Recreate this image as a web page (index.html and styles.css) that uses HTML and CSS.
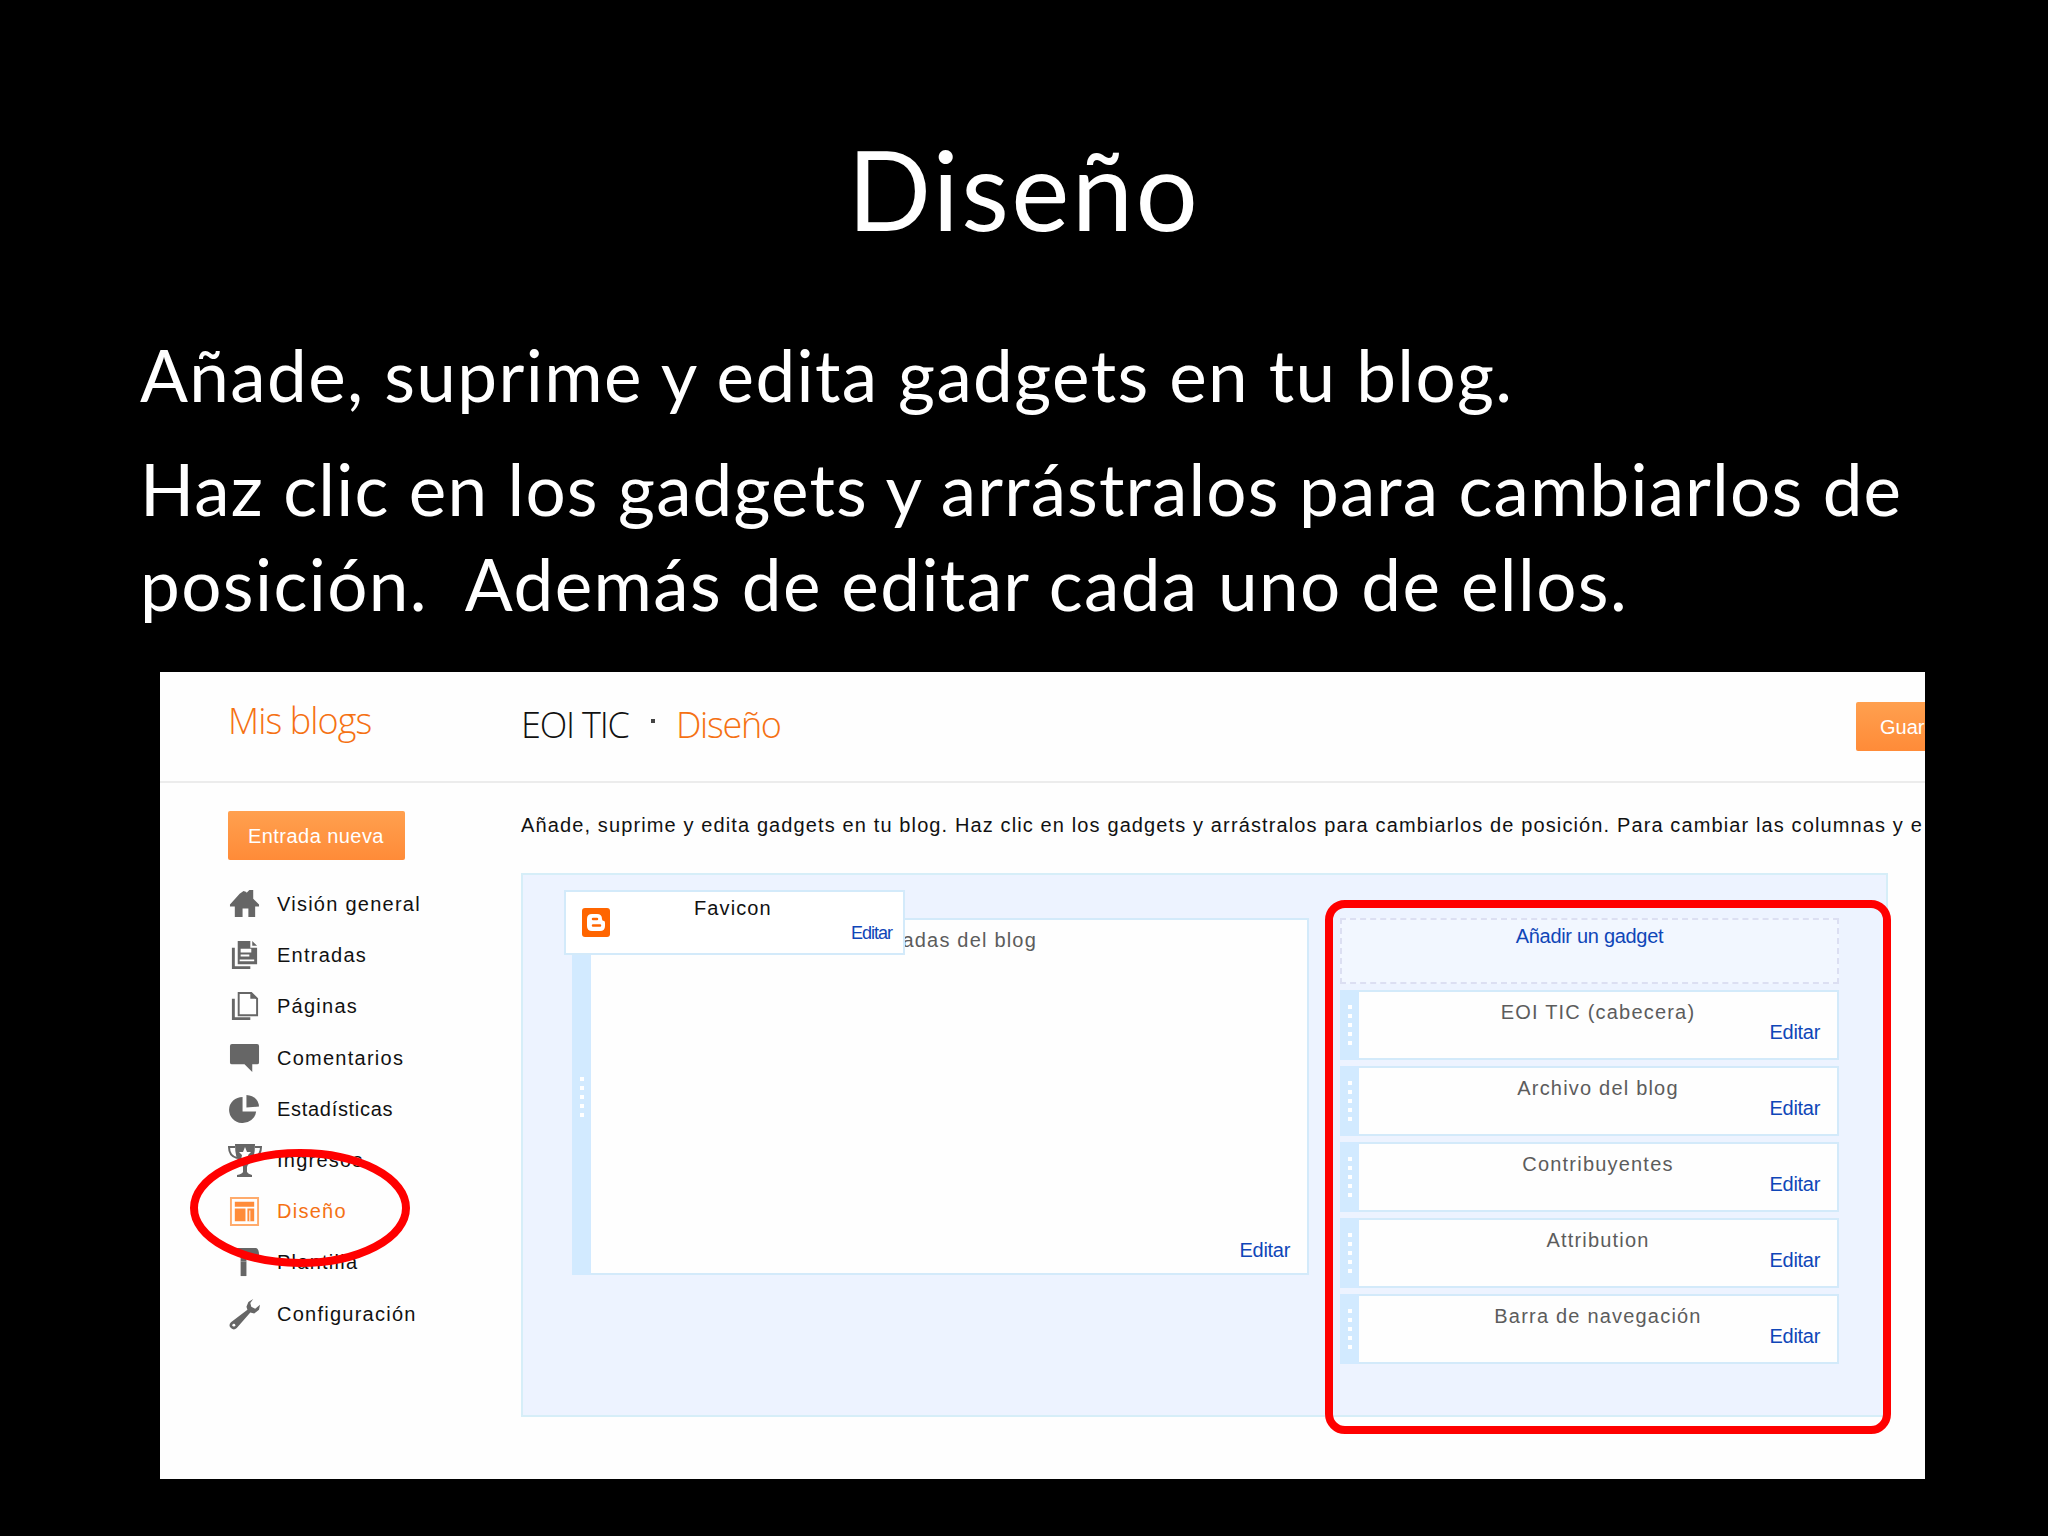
FILE: index.html
```html
<!DOCTYPE html>
<html lang="es">
<head>
    <meta charset="UTF-8">
    <meta name="viewport" content="width=device-width, initial-scale=1.0">
    <title>Diseño</title>
    <link rel="stylesheet" href="styles.css">
</head>
<body>
    <div class="slide">
        <h1>Diseño</h1>

        <div class="slide-text">
            <p>Añade, suprime y edita gadgets en tu blog.</p>
            <p><span class="tight">Haz clic en los gadgets y arrástralos para cambiarlos de</span><br>posición.&nbsp; Además de editar cada uno de ellos.</p>
        </div>

        <div class="blogger">
            <header class="topbar">
                <div class="brand">Mis blogs</div>
                <div class="crumbs">
                    <span class="blog-name">EOI TIC</span>
                    <span class="dot"></span>
                    <span class="section">Diseño</span>
                </div>
                <div class="btn btn-save">Guardar</div>
            </header>

            <div class="content">
                <nav class="sidebar">
                    <div class="btn btn-new">Entrada nueva</div>
                    <ul class="menu">
                        <li>
                            <svg class="icon" viewBox="0 0 32 32"><path d="M1 16 11 5l4-3 3 1v1l3-3h4v9l6 6v2h-4v11h-7v-9h-6v9H6V18H1z"/></svg>
                            <span>Visión general</span>
                        </li>
                        <li>
                            <svg class="icon" viewBox="0 0 32 32"><path d="M3 8h3v19h16v3H3zM9 1h13v7h7v17H9z"/><path d="m24 1 5 5h-5z"/><path class="cut" d="M12 9h11v4H12zM12 15h9v2h-9zM11 20h15v2H11z"/></svg>
                            <span>Entradas</span>
                        </li>
                        <li>
                            <svg class="icon" viewBox="0 0 32 32"><path d="M3 8h3v19h16v3H3z"/><path class="line" d="M10 2h13l6 6v17H10z"/><path d="M22 1v7h7z"/></svg>
                            <span>Páginas</span>
                        </li>
                        <li>
                            <svg class="icon" viewBox="0 0 32 32"><path d="M3 1h26q2 0 2 2v17q0 2-2 2h-5v8l-8-8H3q-2 0-2-2V3q0-2 2-2z"/></svg>
                            <span>Comentarios</span>
                        </li>
                        <li>
                            <svg class="icon" viewBox="0 0 32 32"><path d="M14 3v15h14A14 13.500 0 1 1 14 3z"/><path d="M18 1q12 1 13 12l-13 1z"/></svg>
                            <span class="tight">Estadísticas</span>
                        </li>
                        <li>
                            <svg class="icon trophy" viewBox="0 0 34 34"><path d="M7 0h20q0 15-5 19-3 2-3 4v5q1 2 5 3v2H9v-2q5-1 6-3v-5q0-2-3-4Q7 15 7 0z"/><path class="handle" d="M7 3H1q0 9 8 11M27 3h6q0 9-8 11"/><path class="cut" d="m17 3 2 5h4l-3 3 1 5-4-3-4 3 1-5-3-3h4z"/></svg>
                            <span>Ingresos</span>
                        </li>
                        <li class="active">
                            <svg class="icon" viewBox="0 0 32 32"><path class="frame" d="M2 2h28v28H2z"/><path d="M6 6h20v5H6zM6 13h11v13H6zM19 13h7v13h-7z"/><path class="cut" d="M21 15h1v11h-1z"/></svg>
                            <span>Diseño</span>
                        </li>
                        <li>
                            <svg class="icon" viewBox="0 0 32 32"><path d="M5 1h23q3 1 3 7v2h-3q-1-2-4-2h-6v7h-6V8H5z"/><path d="M12 15h6v15h-6z"/></svg>
                            <span>Plantilla</span>
                        </li>
                        <li>
                            <svg class="icon" viewBox="0 0 32 32"><path d="M25 0 20 3l-2 5 1 3L2 24q-3 3 0 6t6 0l14-16 4 1 5-4 1-5-5 4-4-2-1-4z"/><circle class="cut" cx="5" cy="27" r="1.500"/></svg>
                            <span>Configuración</span>
                        </li>
                    </ul>
                    <svg class="mark-ellipse" viewBox="0 0 222 122"><ellipse cx="111" cy="61" rx="106" ry="55"/></svg>
                </nav>

                <main class="main">
                    <p class="intro">Añade, suprime y edita gadgets en tu blog. Haz clic en los gadgets y arrástralos para cambiarlos de posición. Para cambiar las columnas y e</p>

                    <div class="layout">
                        <div class="widget widget-posts">
                            <div class="grip"><i></i><i></i><i></i><i></i><i></i></div>
                            <div class="widget-body">
                                <div class="widget-title">Entradas del blog</div>
                                <a class="edit">Editar</a>
                            </div>
                        </div>

                        <div class="column">
                            <div class="add-gadget"><a>Añadir un gadget</a></div>
                            <div class="widget">
                                <div class="grip"><i></i><i></i><i></i><i></i><i></i></div>
                                <div class="widget-body">
                                    <div class="widget-title">EOI TIC (cabecera)</div>
                                    <a class="edit">Editar</a>
                                </div>
                            </div>
                            <div class="widget">
                                <div class="grip"><i></i><i></i><i></i><i></i><i></i></div>
                                <div class="widget-body">
                                    <div class="widget-title">Archivo del blog</div>
                                    <a class="edit">Editar</a>
                                </div>
                            </div>
                            <div class="widget">
                                <div class="grip"><i></i><i></i><i></i><i></i><i></i></div>
                                <div class="widget-body">
                                    <div class="widget-title">Contribuyentes</div>
                                    <a class="edit">Editar</a>
                                </div>
                            </div>
                            <div class="widget">
                                <div class="grip"><i></i><i></i><i></i><i></i><i></i></div>
                                <div class="widget-body">
                                    <div class="widget-title">Attribution</div>
                                    <a class="edit">Editar</a>
                                </div>
                            </div>
                            <div class="widget">
                                <div class="grip"><i></i><i></i><i></i><i></i><i></i></div>
                                <div class="widget-body">
                                    <div class="widget-title">Barra de navegación</div>
                                    <a class="edit">Editar</a>
                                </div>
                            </div>
                        </div>

                        <!-- Favicon: queda por encima de las entradas -->
                        <div class="favicon-box">
                            <svg class="blogger-icon" viewBox="0 0 28 29"><rect width="28" height="29" rx="3"/><path class="logo" d="M10 6h5q5 0 5 5 0 2 2 2 1 0 1 2v3q0 5-5 5h-8q-5 0-5-5v-7q0-5 5-5z"/><path class="hole" d="M11 11h4M11 17.500h7"/></svg>
                            <div class="favicon-title">Favicon</div>
                            <a class="edit">Editar</a>
                        </div>
                        <div class="mark-box"></div>
                    </div>
                </main>
            </div>
        </div>
    </div>
</body>
</html>
```
FILE: styles.css
```css
:root {
    --orange: #f57113;
    --link: #0f46b8;
    --line: #d3eafa;
    --grip: #d2eaff;
    --red: #ff0000;
    --gray: #666;
}

* {
    margin: 0;
    padding: 0;
    box-sizing: border-box;
}

body {
    background: #000;
    font-family: 'Liberation Sans', Arial, sans-serif;
    font-size: 20px;
    overflow: hidden;
}

.slide {
    width: 2048px;
    height: 1536px;
    padding-top: 123px;
    color: #fff;
}

h1 {
    font-family: Lato, sans-serif;
    font-size: 110px;
    font-weight: 400;
    line-height: 130px;
    text-align: center;
    letter-spacing: 2.4px;
}

.slide-text {
    height: 419px;
    padding: 74px 0 0 140px;
    font-family: Lato, sans-serif;
    font-size: 71px;
    line-height: 95px;
    letter-spacing: 1.4px;
    white-space: nowrap;
}

.slide-text p + p {
    margin-top: 19px;
}

.slide-text .tight {
    letter-spacing: 1.15px;
}

/* Panel de Blogger */
.blogger {
    width: 1765px;
    height: 807px;
    margin-left: 160px;
    background: #fefefe;
    color: #111;
    overflow: hidden;
}

.topbar {
    display: flex;
    height: 111px;
    border-bottom: 2px solid #ececec;
    font-family: 'Open Sans', sans-serif;
    font-size: 36px;
    font-weight: 300;
    line-height: 48px;
    white-space: nowrap;
}

.brand {
    flex: none;
    width: 361px;
    padding: 25px 0 0 68px;
    color: var(--orange);
    letter-spacing: -0.9px;
}

.crumbs {
    flex: none;
    display: flex;
    width: 1335px;
    padding-top: 29px;
}

.blog-name {
    width: 130px;
    letter-spacing: -1.2px;
}

.dot {
    width: 4px;
    height: 4px;
    margin: 18px 21px 0 0;
    background: #444;
}

.section {
    color: var(--orange);
    letter-spacing: -1.3px;
}

.btn {
    height: 49px;
    border-radius: 2px;
    background: linear-gradient(#ffa04f, #ff8b38);
    color: #fff;
    font: 20px/50px 'Liberation Sans', Arial, sans-serif;
    white-space: nowrap;
}

.btn-save {
    flex: none;
    width: 110px;
    margin-top: 30px;
    padding-left: 24px;
}

.btn-new {
    width: 177px;
    padding-left: 20px;
    letter-spacing: 0.45px;
}

.content {
    display: flex;
}

.sidebar {
    position: relative;
    flex: none;
    width: 361px;
    padding: 28px 0 0 68px;
}

.menu {
    list-style: none;
    padding-top: 19px;
}

.menu li {
    display: flex;
    align-items: center;
    height: 51.2px;
    letter-spacing: 1.25px;
}

.menu .tight {
    letter-spacing: 0.7px;
}

.icon {
    width: 31px;
    height: 31px;
    margin: 0 17px 0 1px;
    fill: var(--gray);
}

.icon.trophy {
    width: 34px;
    height: 34px;
    margin: 0 15px 0 0;
}

.icon .cut {
    fill: #fff;
}

.icon .line,
.icon .handle,
.icon .frame {
    fill: none;
    stroke: var(--gray);
    stroke-width: 2;
}

.menu .active {
    color: var(--orange);
}

.active .icon {
    fill: #ff8c3a;
}

.active .icon .frame {
    stroke: #ffab6c;
}

.mark-ellipse {
    position: absolute;
    left: 29px;
    top: 364px;
    width: 222px;
    height: 122px;
    fill: none;
    stroke: var(--red);
    stroke-width: 8;
}

.main {
    flex: none;
    width: 1404px;
    padding-top: 30px;
}

.intro {
    line-height: 24px;
    letter-spacing: 1.12px;
    white-space: nowrap;
}

/* Zona de gadgets */
.layout {
    position: relative;
    display: flex;
    gap: 31px;
    width: 1367px;
    height: 544px;
    margin-top: 36px;
    padding: 43px 0 0 49px;
    border: 2px solid #d6eef8;
    background: #edf3ff;
}

.column {
    display: flex;
    flex-direction: column;
    gap: 5.5px;
    width: 499px;
}

.add-gadget {
    height: 66px;
    padding-top: 6px;
    border: 2px dashed #dcdff2;
    background: #f2f7ff;
    text-align: center;
    line-height: 20px;
}

.add-gadget a,
.edit {
    color: var(--link);
    letter-spacing: -0.3px;
}

.widget {
    display: flex;
    height: 70.5px;
    line-height: 16px;
}

.widget-posts {
    width: 737px;
    height: 357px;
}

.grip {
    display: flex;
    flex-direction: column;
    align-items: center;
    justify-content: center;
    gap: 5px;
    width: 19px;
    background: var(--grip);
}

.grip i {
    width: 4px;
    height: 4px;
    background: #fff;
}

.widget-body {
    flex: 1;
    display: flex;
    flex-direction: column;
    padding: 12px 17px 18px 0;
    border: 2px solid var(--line);
    border-left: 0;
    background: #fefefe;
}

.widget-posts .widget-body {
    padding-bottom: 15px;
}

.widget-title {
    padding-left: 17px;
    color: #5c5c5c;
    text-align: center;
    letter-spacing: 1.2px;
}

.widget .edit {
    margin-top: auto;
    text-align: right;
}

.favicon-box {
    position: absolute;
    left: 41px;
    top: 15px;
    display: flex;
    width: 341px;
    height: 65px;
    padding: 7px 11px 0 16px;
    border: 2px solid var(--line);
    background: #fff;
    line-height: 18px;
}

.blogger-icon {
    width: 28px;
    height: 29px;
    margin: 9px 84px 0 0;
    fill: #ff6500;
}

.blogger-icon .logo {
    fill: #fff;
}

.blogger-icon .hole {
    fill: none;
    stroke: #ff6500;
    stroke-width: 2.5;
    stroke-linecap: round;
}

.favicon-title {
    letter-spacing: 1.1px;
}

.favicon-box .edit {
    margin: 25px 0 0 auto;
    font-size: 18px;
    letter-spacing: -1px;
}

.mark-box {
    position: absolute;
    left: 802px;
    top: 25px;
    width: 566px;
    height: 534px;
    border: 8px solid var(--red);
    border-radius: 20px;
}
```
